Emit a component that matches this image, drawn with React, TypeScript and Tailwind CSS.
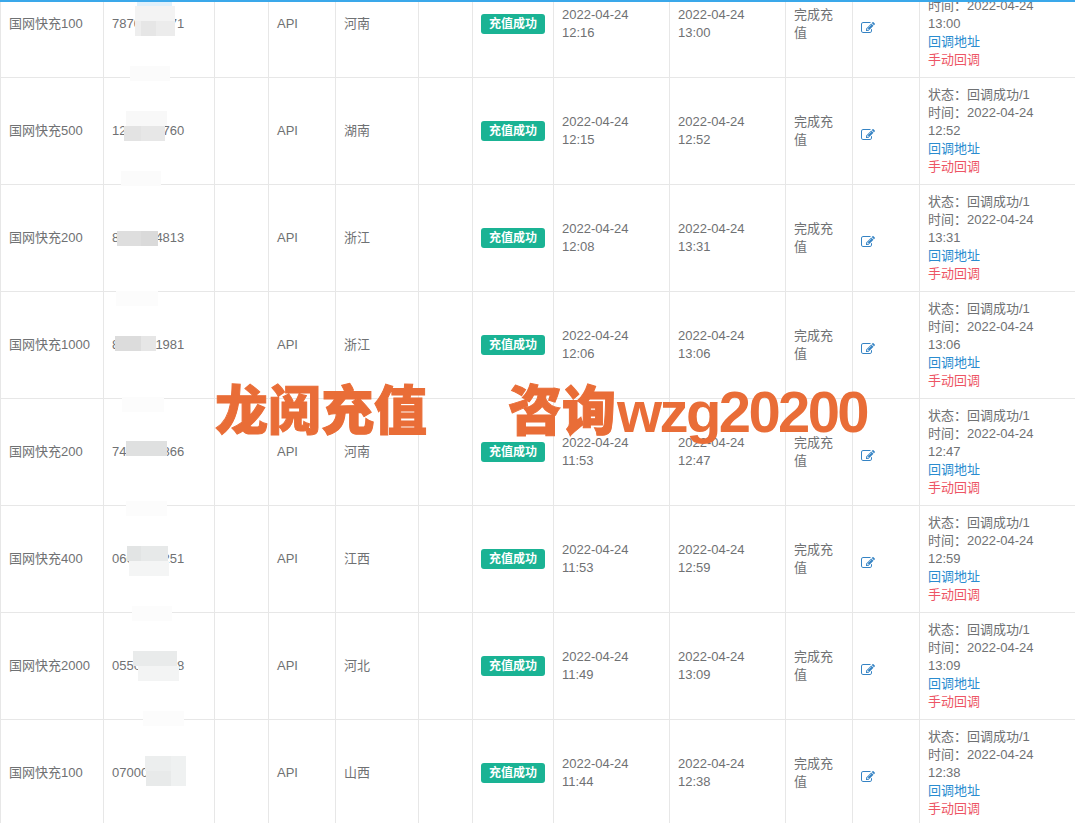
import React from "react";

const rows = [
  ["国网快充100", "7870000071", "河南", "12:16", "13:00"],
  ["国网快充500", "1200000760", "湖南", "12:15", "12:52"],
  ["国网快充200", "8000004813", "浙江", "12:08", "13:31"],
  ["国网快充1000", "8000001981", "浙江", "12:06", "13:06"],
  ["国网快充200", "7400000866", "河南", "11:53", "12:47"],
  ["国网快充400", "0600000251", "江西", "11:53", "12:59"],
  ["国网快充2000", "0550000008", "河北", "11:49", "13:09"],
  ["国网快充100", "0700000000", "山西", "11:44", "12:38"],
];

// [x, y, w, h, colour] of the mosaic patches that cover the numbers
const patches: [number, number, number, number, string][] = [
  [137, 0, 35, 6, "#dff0fb"],
  [135, 6, 40, 15, "#f3f3f3"],
  [135, 21, 6, 15, "#eeeeee"],
  [141, 21, 15, 15, "#e6e6e6"],
  [156, 21, 19, 15, "#ececec"],
  [130, 66, 40, 15, "#fbfbfb"],
  [126, 111, 41, 15, "#f8f8f8"],
  [124, 126, 17, 15, "#e3e3e3"],
  [141, 126, 24, 15, "#e7e7e7"],
  [121, 171, 40, 15, "#fbfbfb"],
  [117, 231, 24, 15, "#dedede"],
  [141, 231, 17, 15, "#dadada"],
  [116, 291, 42, 15, "#fcfcfc"],
  [115, 336, 26, 15, "#dcdcdc"],
  [141, 336, 15, 15, "#e6e6e6"],
  [122, 397, 42, 15, "#fcfcfc"],
  [126, 441, 41, 15, "#dfe0e0"],
  [126, 501, 41, 15, "#fcfcfc"],
  [127, 546, 14, 15, "#e2e4e4"],
  [141, 546, 27, 15, "#e7e9e9"],
  [129, 561, 40, 15, "#f4f5f5"],
  [132, 606, 40, 15, "#fcfcfc"],
  [133, 651, 44, 15, "#e9ebeb"],
  [138, 666, 41, 15, "#f3f4f4"],
  [143, 711, 41, 15, "#fcfcfc"],
  [145, 756, 26, 15, "#eceeee"],
  [171, 756, 15, 15, "#eff1f1"],
  [146, 771, 25, 15, "#e8eaea"],
  [171, 771, 15, 15, "#eff1f1"],
];

const widths = [103, 111, 54, 67, 83, 54, 81, 116, 116, 67, 67, 160];
const cell = "border border-[#e7e7e7] p-2 align-middle overflow-hidden";

function EditIcon() {
  return (
    <svg viewBox="0 0 1792 1792" className="inline-block w-[14px] h-[14px] fill-[#3583c4]">
      <path d="M888 1184l116-116-152-152-116 116v56h96v96h56zm440-720q-16-16-33 1l-350 350q-17 17-1 33t33-1l350-350q17-17 1-33zm80 594v190q0 119-84.5 203.5t-203.5 84.5h-832q-119 0-203.5-84.5t-84.5-203.5v-832q0-119 84.5-203.5t203.5-84.5h832q63 0 117 25 15 7 18 23 3 17-9 29l-49 49q-14 14-32 8-23-6-45-6h-832q-66 0-113 47t-47 113v832q0 66 47 113t113 47h832q66 0 113-47t47-113v-126q0-13 9-22l64-64q15-15 35-7t20 29zm-96-738l288 288-672 672h-288v-288zm444 132l-92 92-288-288 92-92q28-28 68-28t68 28l152 152q28 28 28 68t-28 68z" />
    </svg>
  );
}

export default function App() {
  return (
    <div className="relative flex flex-col h-[823px] overflow-hidden bg-white text-[13px] leading-[18px] text-[#6f7173] font-['Liberation_Sans','Noto_Sans_CJK_SC',sans-serif]">
      <div className="h-[2px] shrink-0 bg-[#3aa8ea] relative z-20" />
      <div className="flex-1 overflow-hidden">
        <table className="table-fixed border-collapse w-[1079px] -mt-[32px]">
          <colgroup>
            {widths.map((w, i) => (
              <col key={i} style={{ width: w }} />
            ))}
          </colgroup>
          <tbody>
            {rows.map((r, i) => (
              <tr key={i} className="h-[107px]">
                <td className={cell}>{r[0]}</td>
                <td className={cell}>{r[1]}</td>
                <td className={cell}></td>
                <td className={cell}>API</td>
                <td className={cell}>{r[2]}</td>
                <td className={cell}></td>
                <td className={cell}>
                  <span className="inline-block h-[20px] w-[64px] rounded-[3px] bg-[#1ab394] text-center text-[12px] leading-[20px] font-bold text-white">
                    充值成功
                  </span>
                </td>
                <td className={cell}>2022-04-24 {r[3]}</td>
                <td className={cell}>2022-04-24 {r[4]}</td>
                <td className={cell}>完成充值</td>
                <td className={`${cell} pt-[14px]`}>
                  <EditIcon />
                </td>
                <td className={cell}>
                  <div>{"状态\uFF1A回调成功/1"}</div>
                  <div>{"时间\uFF1A2022-04-24"}</div>
                  <div>{r[4]}</div>
                  <div className="text-[#2a8ccf]">回调地址</div>
                  <div className="text-[#ed5565]">手动回调</div>
                </td>
              </tr>
            ))}
          </tbody>
        </table>
      </div>

      {patches.map(([x, y, w, h, c], i) => (
        <div key={i} className="absolute z-10" style={{ left: x, top: y, width: w, height: h, background: c }} />
      ))}

      <div className="absolute z-30 left-[215px] top-[379px] flex items-center h-[66px] font-black text-[#e96d37] whitespace-nowrap">
        <span className="w-[293px] text-[53px] leading-[66px] [-webkit-text-stroke:1px_#e96d37]">龙阅充值</span>
        <span className="text-[54px] leading-[66px] [-webkit-text-stroke:1px_#e96d37]">咨询</span>
        <span className="ml-[1px] text-[58px] leading-[66px] font-bold tracking-[-2.6px]">wzg20200</span>
      </div>
    </div>
  );
}
